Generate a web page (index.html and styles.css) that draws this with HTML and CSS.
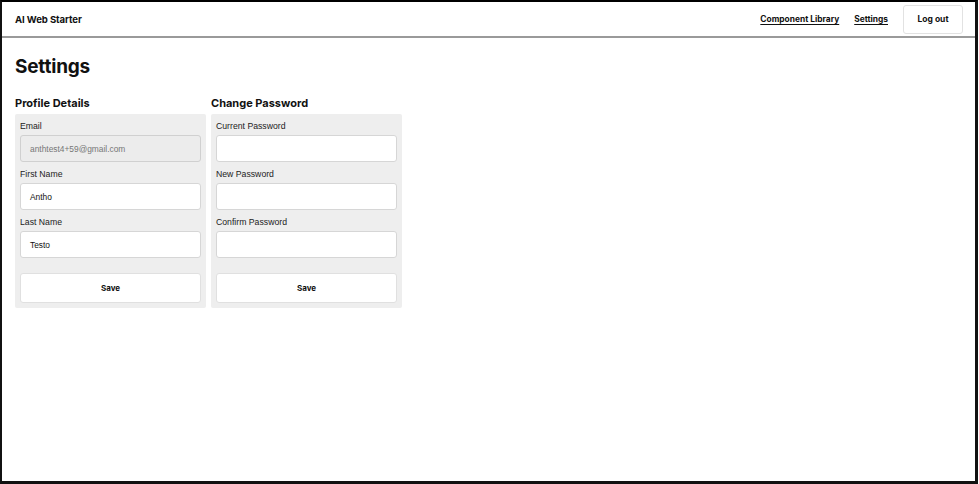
FILE: index.html
```html
<!DOCTYPE html>
<html lang="en">
<head>
<meta charset="utf-8">
<title>Settings</title>
<link rel="stylesheet" href="styles.css">
</head>
<body>
<div class="frame">
  <header class="topbar">
    <div class="brand">AI Web Starter</div>
    <nav class="nav">
      <a href="#" class="nav-link">Component Library</a>
      <a href="#" class="nav-link">Settings</a>
      <button class="logout">Log out</button>
    </nav>
  </header>
  <main class="content">
    <h1 class="title">Settings</h1>
    <div class="columns">
      <section class="section">
        <h2 class="section-title">Profile Details</h2>
        <div class="card">
          <label class="label">Email</label>
          <div class="input input-disabled">anthtest4+59@gmail.com</div>
          <label class="label">First Name</label>
          <div class="input">Antho</div>
          <label class="label">Last Name</label>
          <div class="input">Testo</div>
          <button class="save">Save</button>
        </div>
      </section>
      <section class="section">
        <h2 class="section-title">Change Password</h2>
        <div class="card">
          <label class="label">Current Password</label>
          <div class="input"></div>
          <label class="label">New Password</label>
          <div class="input"></div>
          <label class="label">Confirm Password</label>
          <div class="input"></div>
          <button class="save">Save</button>
        </div>
      </section>
    </div>
  </main>
</div>
</body>
</html>
```
FILE: styles.css
```css
* { box-sizing: border-box; }
html, body { margin: 0; padding: 0; background: #fff; }
body { font-family: Inter, "Liberation Sans", sans-serif; color: #111; }
.frame {
  width: 978px;
  height: 484px;
  border-top: 2px solid #000;
  border-left: 2px solid #111;
  border-right: 3px solid #111;
  border-bottom: 3px solid #111;
  box-shadow: 0 1px 0 #888;
  display: flex;
  flex-direction: column;
}
.topbar {
  height: 36px;
  border-bottom: 2px solid #9a9a9a;
  display: flex;
  align-items: center;
  justify-content: space-between;
  padding: 0 12px 0 13px;
}
.brand { font-size: 9.6px; font-weight: 700; letter-spacing: -0.1px; }
.nav { display: flex; align-items: center; gap: 15px; }
.nav-link {
  font-size: 8.4px; font-weight: 700; color: #111;
  text-decoration: underline; text-underline-offset: 2px;
}
.logout {
  font-family: inherit;
  width: 60px; height: 29px;
  background: #fff;
  border: 1px solid #e2e2e2;
  border-radius: 3px;
  font-size: 8.5px; font-weight: 700; color: #111;
}
.content { padding: 17px 13px; }
.title { margin: 0; font-size: 19px; font-weight: 700; line-height: 24px; letter-spacing: -0.2px; }
.columns { display: flex; gap: 5px; margin-top: 16px; }
.section { width: 191px; }
.section-title { margin: 0 0 3px; font-size: 11px; font-weight: 700; line-height: 16px; }
.card {
  background: #eeeeee;
  border-radius: 2px;
  padding: 5px;
  display: flex; flex-direction: column;
}
.label {
  font-family: "Liberation Sans", Arial, sans-serif;
  font-size: 8.7px; line-height: 14px; color: #222;
}
.input {
  font-family: "Liberation Sans", Arial, sans-serif;
  height: 27px; margin: 2px 0 5px;
  background: #fff;
  border: 1px solid #d6d6d6;
  border-radius: 3px;
  font-size: 8.4px; color: #111;
  display: flex; align-items: center;
  padding: 0 9px;
}
.input-disabled { background: #ececec; color: #777; border-color: #d0d0d0; }
.save {
  font-family: inherit;
  margin-top: 10px;
  height: 30px;
  background: #fff;
  border: 1px solid #e0e0e0;
  border-radius: 3px;
  font-size: 8px; font-weight: 700; color: #111;
}
```
